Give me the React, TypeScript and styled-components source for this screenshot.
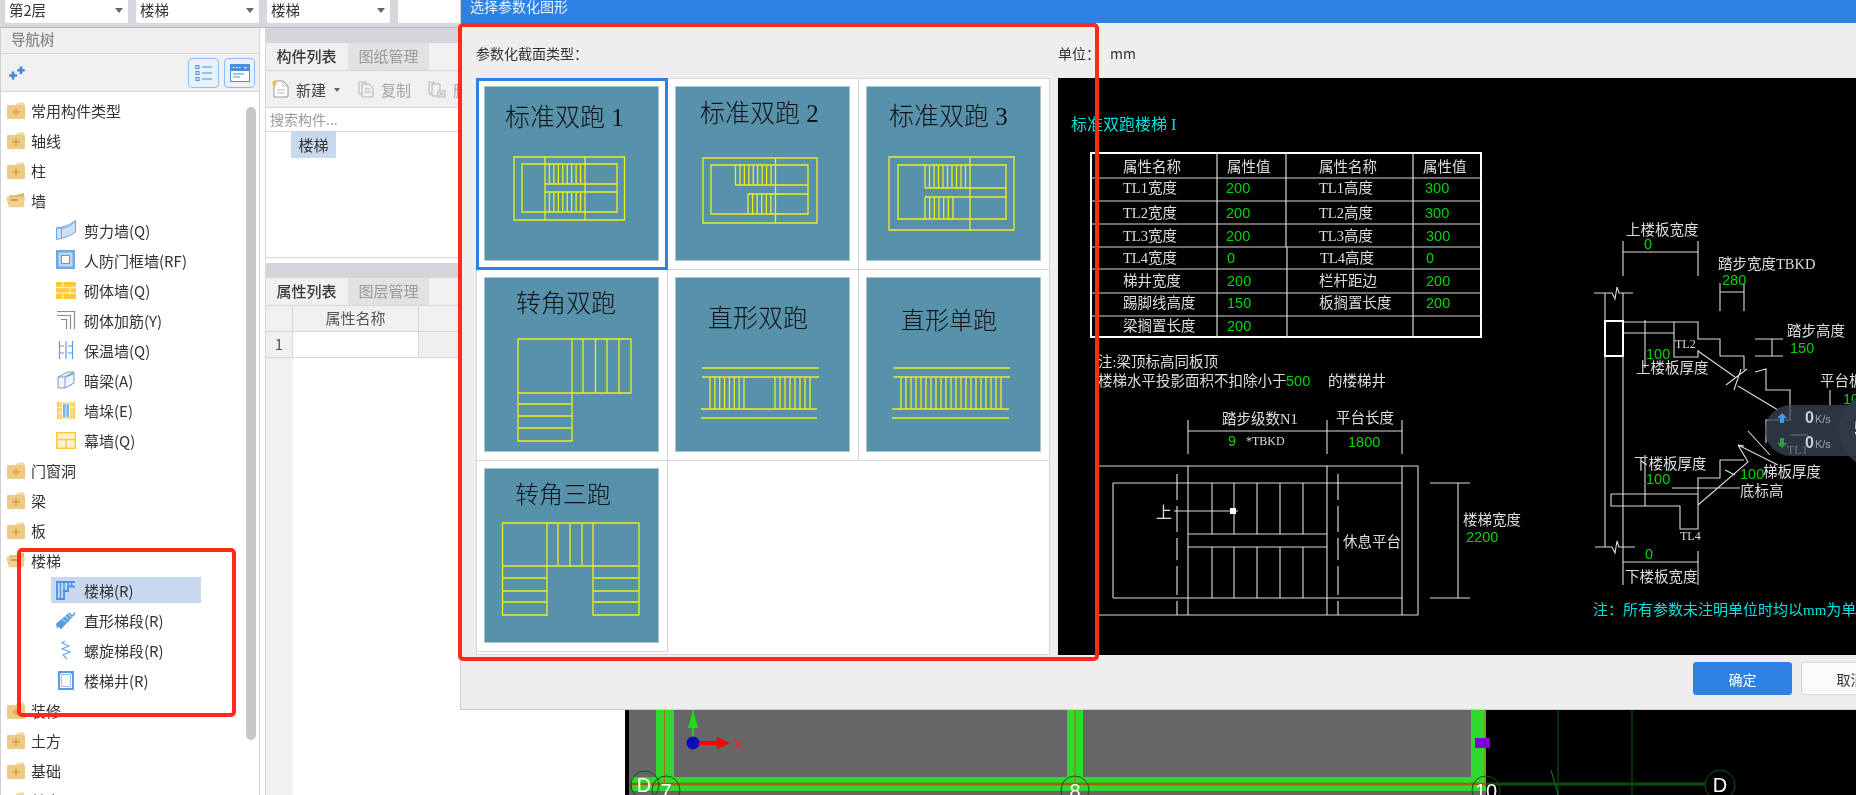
import React from "react";
import styled, { createGlobalStyle } from "styled-components";

const SANS = `"Noto Sans CJK SC", "Liberation Sans", sans-serif`;
const SERIF = `"Liberation Serif", "Noto Sans CJK SC", serif`;
const COLON = "\uFF1A";

const Global = createGlobalStyle`
  html, body { margin: 0; padding: 0; background: #fff; }
  body { font-family: ${SANS}; }
  * { box-sizing: border-box; }
`;

const Page = styled.div`
  position: relative;
  width: 1856px;
  height: 795px;
  overflow: hidden;
  display: flex;
  flex-direction: column;
  background: #fff;
  color: #333;
  filter: blur(0.35px);
`;

/* ---------- top selectors ---------- */
const TopBar = styled.div`
  flex: none;
  height: 28px;
  display: flex;
  gap: 8px;
  padding-left: 5px;
  background: #d6d8db;
  border-bottom: 1px solid #b9bbbe;
`;
const Select = styled.div<{ $wide?: boolean }>`
  width: ${(p) => (p.$wide ? "200px" : "123px")};
  height: 23px;
  background: #fff;
  border-radius: 0 0 2px 2px;
  padding-left: 4px;
  font-size: 14.5px;
  line-height: 20px;
  color: #333;
  display: flex;
  &::after {
    content: "";
    width: 0;
    height: 0;
    margin: 8px 5px 0 auto;
    border-left: 4px solid transparent;
    border-right: 4px solid transparent;
    border-top: 5px solid #666;
  }
`;

const Main = styled.div`
  flex: 1;
  display: flex;
  min-height: 0;
`;

/* ---------- navigation ---------- */
const NavPanel = styled.div`
  flex: none;
  width: 260px;
  display: flex;
  flex-direction: column;
  border-left: 1px solid #cfd1d4;
  border-right: 1px solid #d5d7da;
`;
const NavTitle = styled.div`
  height: 26px;
  padding-left: 10px;
  background: #efefef;
  border-bottom: 1px solid #d5d7da;
  font-size: 14.5px;
  line-height: 22px;
  font-weight: 500;
  color: #8a8a8a;
`;
const NavTools = styled.div`
  height: 38px;
  display: flex;
  align-items: center;
  gap: 5px;
  padding: 0 4px 0 7px;
  background: #f0f0f0;
  border-bottom: 1px solid #d5d7da;
`;
const ToolSpacer = styled.div`
  flex: 1;
`;
const ViewButton = styled.div`
  width: 31px;
  height: 30px;
  display: flex;
  align-items: center;
  justify-content: center;
  background: #e6f2fd;
  border: 1px solid #8dbdf2;
  border-radius: 4px;
`;
const TreeArea = styled.div`
  flex: 1;
  min-height: 0;
  display: flex;
  overflow: hidden;
`;
const TreeList = styled.div`
  flex: 1;
  padding-top: 3px;
`;
const TreeRow = styled.div<{ $child?: boolean; $selected?: boolean }>`
  height: 30px;
  display: flex;
  align-items: center;
  font-size: 15px;
  color: #333;
  gap: ${(p) => (p.$child ? "8px" : "5px")};
  padding-left: ${(p) => (p.$child ? "55px" : "5px")};
  ${(p) =>
    p.$selected &&
    `
    margin: 2px 0 2px 50px;
    height: 26px;
    width: 150px;
    padding-left: 5px;
    background: #c7d8ef;
  `}
`;
const IconBox = styled.span`
  flex: none;
  width: 20px;
  height: 20px;
  display: flex;
  align-items: center;
  justify-content: center;
`;
const ScrollThumb = styled.div`
  flex: none;
  width: 10px;
  height: 633px;
  margin: 15px 3px 0 0;
  border-radius: 5px;
  background: #c8c8c8;
`;
const Gap = styled.div`
  flex: none;
  width: 5px;
`;

/* ---------- component & property panels ---------- */
const MidPanel = styled.div`
  flex: none;
  width: 360px;
  display: flex;
  flex-direction: column;
  border-left: 1px solid #d5d7da;
`;
const Strip = styled.div`
  flex: none;
  height: 15px;
  background: #d3d5d9;
`;
const Tabs = styled.div`
  flex: none;
  height: 28px;
  display: flex;
  background: #f0f0f0;
  border-bottom: 1px solid #d5d7da;
`;
const Tab = styled.div<{ $active?: boolean }>`
  width: 81px;
  text-align: center;
  font-size: 15px;
  line-height: 25px;
  font-weight: ${(p) => (p.$active ? 500 : 400)};
  background: ${(p) => (p.$active ? "#f0f0f0" : "#e2e2e2")};
  color: ${(p) => (p.$active ? "#3a3a3a" : "#9a9a9a")};
  margin-right: 1px;
`;
const Tools = styled.div`
  flex: none;
  height: 37px;
  display: flex;
  align-items: center;
  padding-left: 5px;
  background: #f0f0f0;
  border-bottom: 1px solid #d5d7da;
  font-size: 15px;
  white-space: nowrap;
`;
const ToolLabel = styled.span<{ $muted?: boolean }>`
  margin: 0 ${(p) => (p.$muted ? "17px" : "7px")} 0 7px;
  color: ${(p) => (p.$muted ? "#a5a5a5" : "#444")};
`;
const Caret = styled.span`
  width: 0;
  height: 0;
  margin: 2px 18px 0 1px;
  border-left: 3.5px solid transparent;
  border-right: 3.5px solid transparent;
  border-top: 4px solid #666;
`;
const Search = styled.div`
  flex: none;
  height: 24px;
  padding-left: 4px;
  border-bottom: 1px solid #d5d7da;
  font-size: 14px;
  line-height: 22px;
  color: #9a9a9a;
`;
const ListArea = styled.div`
  flex: none;
  height: 126px;
  padding-left: 25px;
  border-bottom: 1px solid #d5d7da;
`;
const ListItem = styled.div`
  width: 45px;
  height: 26px;
  background: #c7d8ef;
  text-align: center;
  font-size: 15px;
  line-height: 25px;
  color: #333;
`;
const PanelGap = styled.div`
  flex: none;
  height: 5px;
`;
const PropTable = styled.div`
  flex: 1;
  display: grid;
  grid-template-columns: 27px 126px 1fr;
  grid-template-rows: 26px 26px 1fr;
  font-size: 15px;
`;
const HeadCell = styled.div`
  background: #f0f0f0;
  border-right: 1px solid #d5d7da;
  border-bottom: 1px solid #d5d7da;
  text-align: center;
  line-height: 24px;
  color: #555;
`;
const RowNo = styled(HeadCell)`
  color: #555;
`;
const BlankCell = styled.div<{ $grey?: boolean }>`
  background: ${(p) => (p.$grey ? "#efefef" : "#fff")};
  border-bottom: 1px solid #d5d7da;
  border-right: 1px solid #d5d7da;
`;
const Gutter = styled.div`
  background: #f0f0f0;
`;

const Viewport = styled.div`
  flex: 1;
  min-width: 0;
  background: #000;
`;
const ViewportSvg = styled.svg`
  display: block;
`;
const AxisText = styled.text`
  font-family: "Liberation Sans", sans-serif;
  font-size: 20px;
  fill: #fff;
  text-anchor: middle;
`;
const AxisX = styled.text`
  font-family: "Liberation Sans", sans-serif;
  font-size: 15px;
  fill: #ff2020;
`;

/* ---------- dialog ---------- */
const Dialog = styled.div`
  position: absolute;
  left: 460px;
  top: 0;
  width: 1456px;
  height: 710px;
  display: flex;
  flex-direction: column;
  background: #eeeeee;
  border: 1px solid #c9ced6;
  border-top: 0;
`;
const DialogTitle = styled.div`
  flex: none;
  height: 23px;
  padding-left: 9px;
  background: #2f80e3;
  color: #e9f2fd;
  font-size: 14px;
  line-height: 13px;
  overflow: hidden;
`;
const LabelRow = styled.div`
  flex: none;
  height: 55px;
  display: flex;
  align-items: center;
  padding: 5px 0 0 15px;
  font-size: 14px;
  color: #333;
`;
const GridLabel = styled.span`
  width: 582px;
`;
const UnitLabel = styled.span`
  margin-right: 10px;
`;
const DialogBody = styled.div`
  flex: none;
  height: 577px;
  display: flex;
  gap: 8px;
  padding: 0 15px;
`;
const ShapeGrid = styled.div`
  flex: none;
  width: 574px;
  height: 577px;
  display: grid;
  grid-template-columns: 191px 191px 190px;
  grid-auto-rows: 191px;
  background: #fff;
  border: 1px solid #d3d6da;
`;
const ShapeCell = styled.div<{ $selected?: boolean }>`
  padding: 7px;
  background: #fff;
  border-bottom: 1px solid #d3d6da;
  border-right: 1px solid #d3d6da;
  &:nth-child(3n) {
    border-right: 0;
  }
  ${(p) =>
    p.$selected &&
    `
    margin: -1px 0 0 -1px;
    padding: 5px;
    border: 3px solid #2f80e3;
  `}
`;
const ShapeSvg = styled.svg`
  display: block;
  width: 175px;
  height: 175px;
  background: #5891aa;
  box-shadow: 0 0 0 1px #a9c5d2 inset;
`;
const ShapeTitle = styled.text<{ $size: number }>`
  font-family: ${SERIF};
  font-weight: 300;
  font-size: ${(p) => p.$size}px;
  fill: #101418;
`;
const CadPane = styled.div`
  flex: 1;
  background: #000;
  min-width: 0;
`;
const CadSvg = styled.svg`
  display: block;
`;
const CadLabel = styled.text<{ $kind?: "white" | "green" | "cyan"; $size?: number }>`
  font-family: ${(p) => (p.$kind === "green" ? `"Liberation Sans", sans-serif` : SERIF)};
  font-size: ${(p) => p.$size ?? 14.5}px;
  fill: ${(p) =>
    p.$kind === "green" ? "#00d400" : p.$kind === "cyan" ? "#00e0e0" : "#dedede"};
  dominant-baseline: central;
`;
const Footer = styled.div`
  flex: 1;
  display: flex;
  justify-content: flex-end;
  align-items: flex-start;
  gap: 9px;
  padding: 7px 15px 0 0;
`;
const Button = styled.div<{ $primary?: boolean }>`
  width: 99px;
  height: 33px;
  text-align: center;
  font-size: 14px;
  line-height: 32px;
  border-radius: 3px;
  background: ${(p) => (p.$primary ? "#2f80e3" : "#fbfbfb")};
  color: ${(p) => (p.$primary ? "#fff" : "#333")};
  border: 1px solid ${(p) => (p.$primary ? "#2f80e3" : "#d3d6da")};
`;

/* ---------- overlays ---------- */
const Annotation = styled.div<{ $l: number; $t: number; $w: number; $h: number }>`
  position: absolute;
  left: ${(p) => p.$l}px;
  top: ${(p) => p.$t}px;
  width: ${(p) => p.$w}px;
  height: ${(p) => p.$h}px;
  border: 4px solid #ff2a1a;
  border-radius: 5px;
`;
const SpeedPill = styled.div`
  position: absolute;
  left: 1765px;
  top: 405px;
  width: 120px;
  height: 51px;
  border-radius: 26px;
  background: rgba(62, 72, 88, 0.72);
  display: grid;
  grid-template-rows: 1fr 1fr;
  padding-left: 11px;
  font-family: "Liberation Sans", sans-serif;
`;
const SpeedRow = styled.div`
  display: flex;
  align-items: center;
  gap: 17px;
  color: #c9ced6;
  font-size: 16px;
  font-weight: 700;
`;
const SpeedUnit = styled.span`
  font-size: 11px;
  font-weight: 400;
  color: #9aa3ae;
  margin-left: 1px;
`;
const SpeedDial = styled.div`
  position: absolute;
  left: 1839px;
  top: 391px;
  width: 78px;
  height: 78px;
  border-radius: 50%;
  background: rgba(50, 58, 72, 0.9);
  color: #d5d9df;
  font-family: "Liberation Sans", sans-serif;
  font-size: 22px;
  font-weight: 700;
  padding: 25px 0 0 15px;
`;

/* ---------- icons ---------- */
const FolderClosed = () => (
  <svg width="18" height="17" viewBox="0 0 18 17">
    <path d="M9 2 L12 .5 H17 V3 H9Z" fill="#f3d9a4" />
    <rect x="0" y="3" width="18" height="14" rx="1" fill="#eecb85" />
    <path d="M9 6.5v7M5.5 10h7" stroke="#dba94f" strokeWidth="2" />
  </svg>
);
const FolderOpen = () => (
  <svg width="21" height="16" viewBox="0 0 21 16">
    <path d="M3 3 L9 3 L19 .5 V14 H3Z" fill="#e3b96b" />
    <path d="M0 5 H20 L18 15.5 H3Z" fill="#f0cf8d" />
    <path d="M5 8h7" stroke="#c4994a" strokeWidth="2" />
  </svg>
);
const IconShear = () => (
  <svg width="20" height="20" viewBox="0 0 20 20">
    <path d="M.5 8 C7 7 14 5 19.5 .5 V12 C14 16 7 18.5 .5 19.5Z" fill="#cfe0f5" stroke="#6ba4e6" />
    <path d="M.5 8 C7 9 14 8 19.5 .5M5.5 8v10" fill="none" stroke="#6ba4e6" />
  </svg>
);
const IconFrame = () => (
  <svg width="20" height="20" viewBox="0 0 20 20">
    <rect width="19" height="19" fill="#6fa8e8" />
    <rect x="2.5" y="2.5" width="14" height="14" fill="#bcd7f6" />
    <rect x="5.5" y="5.5" width="8" height="8" fill="#fff" stroke="#5b9be0" />
  </svg>
);
const IconBrick = () => (
  <svg width="20" height="17" viewBox="0 0 20 17">
    <rect width="20" height="17" fill="#ffc83d" />
    <path d="M0 5.5H20M0 11H20M7 0V5.5M14 5.5V11M7 11V17" stroke="#ffeeb5" strokeWidth="1.3" />
  </svg>
);
const IconRebar = () => (
  <svg width="20" height="20" viewBox="0 0 20 20">
    <path d="M1 1.5H18.5V19M1 5.5H14.5V19M5 9.5H10.5V19" fill="none" stroke="#7f8fa5" strokeWidth="1.2" />
  </svg>
);
const IconInsul = () => (
  <svg width="16" height="18" viewBox="0 0 16 18">
    <path d="M1.5 0V18M8 0V18M14.5 0V18M1 5H6M10 5H15M1 12H6M10 12H15" stroke="#5b9be0" strokeWidth="1.2" />
  </svg>
);
const IconBeam = () => (
  <svg width="18" height="18" viewBox="0 0 18 18">
    <path d="M1 6 L11 1 H17 V12 L8 17 H1Z" fill="#eef4fc" stroke="#7b9cc6" />
    <path d="M1 6H8L17 1M8 6V17" fill="none" stroke="#7b9cc6" />
    <path d="M9 5 L16 1.6 V3.5 L9 6.5Z" fill="#6fa8e8" />
  </svg>
);
const IconPier = () => (
  <svg width="18" height="17" viewBox="0 0 18 17">
    <rect width="18" height="17" fill="#ffcd52" />
    <path d="M0 5.5H18M0 11H18M3 0V17M15 0V17" stroke="#fff0c2" />
    <rect x="5.5" y="1" width="7" height="15" fill="#7fb2ea" stroke="#fff" />
    <path d="M9 1V16" stroke="#dfeeff" />
  </svg>
);
const IconCurtain = () => (
  <svg width="20" height="17" viewBox="0 0 20 17">
    <rect x=".75" y=".75" width="18.5" height="15.5" fill="#fff4d2" stroke="#ffc83d" strokeWidth="1.5" />
    <path d="M0 7.5H20M10 7.5V17" stroke="#ffc83d" strokeWidth="1.6" />
  </svg>
);
const IconStair = () => (
  <svg width="20" height="19" viewBox="0 0 20 19">
    <path d="M0 1H19M1 1V18H8V10H12V5.5H19" fill="none" stroke="#4a92e6" strokeWidth="1.8" />
    <path d="M4.5 1V18M8 1V10M12 1V5.5M15.5 1V5.5" fill="none" stroke="#4a92e6" strokeWidth="1.4" />
  </svg>
);
const IconRun = () => (
  <svg width="21" height="21" viewBox="0 0 21 21">
    <path d="M0 14 L14 2 L17 5 L20 1 L20 4 L5 20 L3 17 L1 19Z" fill="#5a9be6" />
    <path d="M7 9l3 3M10 6l3 3M13 4l3 3" stroke="#fff" strokeWidth="1" />
  </svg>
);
const IconSpiral = () => (
  <svg width="12" height="20" viewBox="0 0 12 20">
    <path d="M5 1 L2 3 L9 6 L2 9 L10 12 L3 15 L7 19" fill="none" stroke="#6ea7e8" strokeWidth="1.2" />
  </svg>
);
const IconShaft = () => (
  <svg width="16" height="19" viewBox="0 0 16 19">
    <rect x="1" y="1" width="14" height="17" fill="#fff" stroke="#5b9be0" strokeWidth="2" />
    <rect x="3.5" y="3.5" width="9" height="12" fill="#fff" stroke="#9cc2ee" />
    <path d="M1 1L3.5 3.5M15 1L12.5 3.5" stroke="#5b9be0" />
  </svg>
);
const IconSpark = () => (
  <svg width="18" height="14" viewBox="0 0 18 14">
    <path d="M5 5.5V13.5M1 9.5H9" stroke="#3f87d8" strokeWidth="2.6" />
    <path d="M13 .5V8M9.3 4.2H16.7" stroke="#3f87d8" strokeWidth="2.6" />
  </svg>
);
const IconList = () => (
  <svg width="18" height="18" viewBox="0 0 18 18">
    <path d="M7 3H17M7 9H17M7 15H17" stroke="#4a8fd8" strokeWidth="1.2" />
    <rect x="1" y="1.5" width="3" height="3" fill="none" stroke="#4a8fd8" />
    <rect x="1" y="7.5" width="3" height="3" fill="none" stroke="#4a8fd8" />
    <rect x="1" y="13.5" width="3" height="3" fill="none" stroke="#4a8fd8" />
  </svg>
);
const IconWindow = () => (
  <svg width="20" height="18" viewBox="0 0 20 18">
    <rect x=".5" y=".5" width="19" height="17" fill="#fff" stroke="#4a8fd8" />
    <rect x="1" y="1" width="18" height="6" fill="#4a8fd8" />
    <path d="M3 3.5h1.5M6 3.5h1.5M9 3.5h1.5" stroke="#fff" />
    <path d="M14 3l3 0-1.5 2z" fill="#fff" />
    <path d="M3 10h11M3 13h7" stroke="#4a8fd8" />
  </svg>
);
const IconNew = () => (
  <svg width="18" height="18" viewBox="0 0 18 18">
    <path d="M3 1H12L17 6V17H3Z" fill="#fff" stroke="#9a9a9a" />
    <path d="M12 1V6H17M6 10H14M6 13H14" fill="none" stroke="#b5b5b5" />
    <path d="M3.5 0l.9 2 2.1.3-1.5 1.5.4 2.1-1.9-1-1.9 1 .4-2.1L.5 2.3 2.6 2Z" fill="#f2b93b" />
  </svg>
);
const IconCopy = () => (
  <svg width="16" height="17" viewBox="0 0 16 17">
    <path d="M1 1H8V3M4 3H11L15 7V16H4Z" fill="none" stroke="#b4b4b4" />
    <path d="M1 1V13H4M6.5 8H12.5M6.5 11H12.5" fill="none" stroke="#b4b4b4" />
  </svg>
);
const IconDelete = () => (
  <svg width="18" height="17" viewBox="0 0 18 17">
    <path d="M6 3V1H1V13H4M4 3H12V9M4 3V15H9" fill="none" stroke="#b4b4b4" />
    <rect x="10" y="10" width="7" height="6" fill="none" stroke="#b4b4b4" />
    <path d="M11.5 11.5L15.5 14.5M15.5 11.5L11.5 14.5" stroke="#b4b4b4" />
  </svg>
);
const ArrowUpIcon = () => (
  <svg width="12" height="12" viewBox="0 0 12 12">
    <path d="M6 1L11 6H8V11H4V6H1Z" fill="#3d9fe8" />
  </svg>
);
const ArrowDownIcon = () => (
  <svg width="12" height="12" viewBox="0 0 12 12">
    <path d="M6 11L11 6H8V1H4V6H1Z" fill="#2e9e3e" />
  </svg>
);

/* ---------- data ---------- */
type Node = { label: string; icon: React.ReactNode; child?: boolean; selected?: boolean };
const closed = <FolderClosed />;
const tree: Node[] = [
  { label: "常用构件类型", icon: closed },
  { label: "轴线", icon: closed },
  { label: "柱", icon: closed },
  { label: "墙", icon: <FolderOpen /> },
  { label: "剪力墙(Q)", icon: <IconShear />, child: true },
  { label: "人防门框墙(RF)", icon: <IconFrame />, child: true },
  { label: "砌体墙(Q)", icon: <IconBrick />, child: true },
  { label: "砌体加筋(Y)", icon: <IconRebar />, child: true },
  { label: "保温墙(Q)", icon: <IconInsul />, child: true },
  { label: "暗梁(A)", icon: <IconBeam />, child: true },
  { label: "墙垛(E)", icon: <IconPier />, child: true },
  { label: "幕墙(Q)", icon: <IconCurtain />, child: true },
  { label: "门窗洞", icon: closed },
  { label: "梁", icon: closed },
  { label: "板", icon: closed },
  { label: "楼梯", icon: <FolderOpen /> },
  { label: "楼梯(R)", icon: <IconStair />, child: true, selected: true },
  { label: "直形梯段(R)", icon: <IconRun />, child: true },
  { label: "螺旋梯段(R)", icon: <IconSpiral />, child: true },
  { label: "楼梯井(R)", icon: <IconShaft />, child: true },
  { label: "装修", icon: closed },
  { label: "土方", icon: closed },
  { label: "基础", icon: closed },
  { label: "其它", icon: closed },
];

const rect = (x0: number, y0: number, x1: number, y1: number) =>
  `M${x0} ${y0}H${x1}V${y1}H${x0}Z`;
const hline = (y: number, x0: number, x1: number) => `M${x0} ${y}H${x1}`;
const vline = (x: number, y0: number, y1: number) => `M${x} ${y0}V${y1}`;
const vsteps = (x0: number, x1: number, y0: number, y1: number, n: number) =>
  Array.from({ length: n + 1 }, (_, i) => vline(x0 + ((x1 - x0) * i) / n, y0, y1)).join("");

type Shape = { title: string; x: number; y: number; size: number; d: string };
const shapes: Shape[] = [
  {
    title: "标准双跑 1",
    x: 21,
    y: 40,
    size: 25,
    d:
      rect(30, 71, 140.5, 134) +
      rect(38, 78, 133, 126) +
      vline(61, 71, 134) +
      vline(101, 71, 134) +
      vsteps(61, 101, 78, 98, 9) +
      vsteps(61, 101, 106, 126, 9) +
      hline(98, 61, 133) +
      hline(106, 61, 133),
  },
  {
    title: "标准双跑 2",
    x: 25,
    y: 36,
    size: 25,
    d:
      rect(28, 72, 142, 137) +
      rect(36, 79, 133, 128) +
      vline(100.5, 72, 137) +
      vsteps(60.5, 100.5, 79, 99, 9) +
      vsteps(73, 100.5, 108, 128, 6) +
      hline(99, 60.5, 133) +
      hline(108, 73, 133),
  },
  {
    title: "标准双跑 3",
    x: 23,
    y: 39,
    size: 25,
    d:
      rect(23, 71, 148, 144) +
      rect(32, 79, 140, 133) +
      vline(104, 71, 144) +
      vsteps(59, 104, 79, 102, 10) +
      vsteps(59, 87, 111, 133, 6) +
      hline(102, 59, 140) +
      hline(111, 59, 140),
  },
  {
    title: "转角双跑",
    x: 32,
    y: 35,
    size: 25,
    d:
      rect(34, 62, 147, 116) +
      rect(34, 116, 88, 164) +
      vline(88, 62, 116) +
      vline(99, 62, 116) +
      vline(111.5, 62, 116) +
      vline(123, 62, 116) +
      vline(135, 62, 116) +
      hline(127, 34, 88) +
      hline(139, 34, 88) +
      hline(151, 34, 88),
  },
  {
    title: "直形双跑",
    x: 33,
    y: 50,
    size: 25,
    d:
      hline(91, 27, 144) +
      hline(100, 27, 144) +
      hline(132, 26, 142) +
      hline(141, 26, 142) +
      vsteps(35, 69, 100, 132, 7) +
      vsteps(100, 135, 100, 132, 7),
  },
  {
    title: "直形单跑",
    x: 35,
    y: 52,
    size: 24,
    d:
      hline(91, 27.5, 144) +
      hline(100, 27.5, 144) +
      hline(132, 26, 143) +
      hline(141, 26, 143) +
      vsteps(35, 135, 100, 132, 20),
  },
  {
    title: "转角三跑",
    x: 31,
    y: 35,
    size: 24,
    d:
      rect(18.5, 55, 155, 98) +
      rect(18.5, 98, 63, 147) +
      rect(109, 98, 155, 147) +
      vline(63, 55, 98) +
      vline(74, 55, 98) +
      vline(86, 55, 98) +
      vline(98, 55, 98) +
      vline(109, 55, 98) +
      hline(110, 18.5, 63) +
      hline(123, 18.5, 63) +
      hline(134, 18.5, 63) +
      hline(110, 109, 155) +
      hline(123, 109, 155) +
      hline(134, 109, 155),
  },
];

type Lbl = [string, number, number, ("white" | "green" | "cyan")?, number?];
const rowY = [188, 213, 236, 258, 281, 303, 326];
const tableText: Lbl[] = [
  ["属性名称", 1123, 167],
  ["属性值", 1227, 167],
  ["属性名称", 1319, 167],
  ["属性值", 1423, 167],
  ["TL1宽度", 1123, rowY[0]],
  ["TL2宽度", 1123, rowY[1]],
  ["TL3宽度", 1123, rowY[2]],
  ["TL4宽度", 1123, rowY[3]],
  ["梯井宽度", 1123, rowY[4]],
  ["踢脚线高度", 1123, rowY[5]],
  ["梁搁置长度", 1123, rowY[6]],
  ["200", 1226, rowY[0], "green"],
  ["200", 1226, rowY[1], "green"],
  ["200", 1226, rowY[2], "green"],
  ["0", 1227, rowY[3], "green"],
  ["200", 1227, rowY[4], "green"],
  ["150", 1227, rowY[5], "green"],
  ["200", 1227, rowY[6], "green"],
  ["TL1高度", 1319, rowY[0]],
  ["TL2高度", 1319, rowY[1]],
  ["TL3高度", 1319, rowY[2]],
  ["TL4高度", 1320, rowY[3]],
  ["栏杆距边", 1319, rowY[4]],
  ["板搁置长度", 1319, rowY[5]],
  ["300", 1425, rowY[0], "green"],
  ["300", 1425, rowY[1], "green"],
  ["300", 1426, rowY[2], "green"],
  ["0", 1426, rowY[3], "green"],
  ["200", 1426, rowY[4], "green"],
  ["200", 1426, rowY[5], "green"],
];
const cadText: Lbl[] = [
  ["标准双跑楼梯 I", 1071, 124, "cyan", 16],
  ["注:梁顶标高同板顶", 1098, 362],
  ["楼梯水平投影面积不扣除小于", 1098, 381],
  ["500", 1286, 381, "green"],
  ["的楼梯井", 1328, 381],
  ["踏步级数N1", 1222, 419],
  ["平台长度", 1336, 418],
  ["9", 1228, 441, "green"],
  ["*TBKD", 1246, 441, "white", 12],
  ["1800", 1348, 442, "green"],
  ["上", 1156, 512, "white", 16],
  ["休息平台", 1343, 542],
  ["楼梯宽度", 1463, 520],
  ["2200", 1466, 537, "green"],
  ["上楼板宽度", 1626, 230],
  ["0", 1644, 244, "green"],
  ["踏步宽度TBKD", 1718, 264],
  ["280", 1722, 280, "green"],
  ["TL2", 1675, 344, "white", 12],
  ["100", 1646, 354, "green"],
  ["上楼板厚度", 1636, 368],
  ["踏步高度", 1787, 331],
  ["150", 1790, 348, "green"],
  ["平台板厚度", 1820, 381],
  ["100", 1843, 399, "green"],
  ["TL1", 1787, 450, "white", 12],
  ["下楼板厚度", 1634, 464],
  ["100", 1646, 479, "green"],
  ["100", 1740, 474, "green"],
  ["梯板厚度", 1763, 472],
  ["底标高", 1740, 491],
  ["TL4", 1680, 536, "white", 12],
  ["0", 1645, 554, "green"],
  ["下楼板宽度", 1625, 577],
  [`注${COLON}所有参数未注明单位时均以mm为单位`, 1593, 610, "cyan", 15],
];

const tableOuter = rect(1091, 153, 1481, 337);
const tableGrid =
  [178, 201, 224, 247, 269, 293, 316].map((y) => hline(y, 1091, 1481)).join("") +
  vline(1217, 153, 337) +
  vline(1286, 153, 247) +
  vline(1287, 247, 337) +
  vline(1413, 153, 337);

const planLines =
  hline(466, 1098, 1418) +
  hline(615, 1098, 1418) +
  vline(1418, 466, 615) +
  hline(483, 1113, 1402) +
  hline(598, 1113, 1402) +
  vline(1113, 483, 598) +
  vline(1188, 466, 615) +
  vline(1327, 466, 615) +
  vline(1402, 466, 615) +
  hline(534, 1188, 1327) +
  hline(547, 1188, 1327) +
  [1212, 1234, 1257, 1280, 1303].map((x) => vline(x, 483, 534) + vline(x, 547, 598)).join("") +
  hline(511, 1174, 1238) +
  hline(431, 1188, 1402) +
  vline(1188, 420, 454) +
  vline(1327, 420, 454) +
  vline(1402, 420, 454) +
  hline(483, 1430, 1470) +
  hline(598, 1430, 1470) +
  vline(1458, 483, 598);

const sectionLines =
  hline(252, 1623, 1698) +
  vline(1623, 241, 276) +
  vline(1698, 241, 276) +
  hline(292, 1720, 1744) +
  vline(1720, 283, 311) +
  vline(1744, 283, 311) +
  "M1594 293H1612L1615 299L1617 287L1619 293H1633" +
  "M1595 547H1612L1615 553L1617 541L1619 547H1635" +
  vline(1605, 293, 547) +
  vline(1623, 293, 585) +
  vline(1698, 551, 585) +
  hline(562, 1623, 1698) +
  "M1622 322H1698V339H1720V356H1744V370" +
  "M1622 333H1674M1674 322V357H1698V350" +
  "M1698 351L1735 377M1726 385L1747 369M1738 386L1778 410" +
  "M1741 369L1734 390M1755 372L1766 369V390H1790V420H1766V443" +
  "M1790 435H1808M1748 431L1770 455" +
  "M1744 446L1738 445L1778 465" +
  vline(1645, 320, 368) +
  vline(1645, 455, 506) +
  "M1611 494H1698V478H1720V460H1744" +
  "M1611 494V506H1680V529H1698V478" +
  hline(488, 1672, 1740) +
  "M1698 505L1748 462L1738 445M1725 470L1735 475" +
  hline(339, 1755, 1783) +
  hline(356, 1755, 1783) +
  vline(1772, 339, 356) +
  "M1830 390V405";

const App: React.FC = () => (
  <Page>
    <Global />
    <TopBar>
      <Select>第2层</Select>
      <Select>楼梯</Select>
      <Select>楼梯</Select>
      <Select $wide />
    </TopBar>
    <Main>
      <NavPanel>
        <NavTitle>导航树</NavTitle>
        <NavTools>
          <IconSpark />
          <ToolSpacer />
          <ViewButton>
            <IconList />
          </ViewButton>
          <ViewButton>
            <IconWindow />
          </ViewButton>
        </NavTools>
        <TreeArea>
          <TreeList>
            {tree.map((n) => (
              <TreeRow key={n.label} $child={n.child} $selected={n.selected}>
                <IconBox>{n.icon}</IconBox>
                {n.label}
              </TreeRow>
            ))}
          </TreeList>
          <ScrollThumb />
        </TreeArea>
      </NavPanel>
      <Gap />
      <MidPanel>
        <Strip />
        <Tabs>
          <Tab $active>构件列表</Tab>
          <Tab>图纸管理</Tab>
        </Tabs>
        <Tools>
          <IconNew />
          <ToolLabel>新建</ToolLabel>
          <Caret />
          <IconCopy />
          <ToolLabel $muted>复制</ToolLabel>
          <IconDelete />
          <ToolLabel $muted>删除</ToolLabel>
        </Tools>
        <Search>搜索构件...</Search>
        <ListArea>
          <ListItem>楼梯</ListItem>
        </ListArea>
        <PanelGap />
        <Strip />
        <Tabs>
          <Tab $active>属性列表</Tab>
          <Tab>图层管理</Tab>
        </Tabs>
        <PropTable>
          <HeadCell />
          <HeadCell>属性名称</HeadCell>
          <HeadCell>属性值</HeadCell>
          <RowNo>1</RowNo>
          <BlankCell />
          <BlankCell $grey />
          <Gutter />
          <div />
          <div />
        </PropTable>
      </MidPanel>
      <Viewport>
        <ViewportSvg width="1231" height="767" viewBox="625 28 1231 767">
          <rect x="629" y="28" width="857" height="767" fill="#666" />
          <path d="M1558 28V795M1632 28V795" stroke="#0f4d0f" strokeWidth="1.2" />
          <path d="M1486 784H1705" stroke="#0f4d0f" strokeWidth="3" />
          <path d="M1551 770L1558 795" stroke="#1c7a1c" />
          <circle cx="1720" cy="785" r="15" fill="none" stroke="#0c550c" />
          <path
            d="M656 28H674V777H1067V28H1083V777H1471V28H1486V791H632V777H656Z"
            fill="#2ed82e"
          />
          <path d="M664.5 28V784M1075 28V784M1485 28V784" stroke="#b06a10" strokeWidth="1" fill="none" />
          <path d="M632 784H1486" stroke="#a85a10" strokeWidth="2.5" />
          <path d="M693 710V738" stroke="#19e019" strokeWidth="1.6" />
          <path d="M693 710L688 728H698Z" fill="#19e019" />
          <ellipse cx="693" cy="743" rx="6.5" ry="6.5" fill="#0b0bb8" />
          <path d="M699 741H717V737L730 743L717 749V745H699Z" fill="#ff0000" />
          <AxisX x="733" y="749">X</AxisX>
          <rect x="1475" y="738" width="15" height="10" fill="#7d00d8" />
          <circle cx="645" cy="785" r="14" fill="none" stroke="#0c550c" />
          <circle cx="666" cy="790" r="14" fill="none" stroke="#0c550c" />
          <circle cx="1075" cy="790" r="14" fill="none" stroke="#0c550c" />
          <circle cx="1486" cy="790" r="14" fill="none" stroke="#0c550c" />
          <AxisText x="644" y="792">D</AxisText>
          <AxisText x="666" y="798">7</AxisText>
          <AxisText x="1075" y="798">8</AxisText>
          <AxisText x="1486" y="798">10</AxisText>
          <AxisText x="1720" y="792">D</AxisText>
        </ViewportSvg>
      </Viewport>
    </Main>

    <Dialog>
      <DialogTitle>选择参数化图形</DialogTitle>
      <LabelRow>
        <GridLabel>{`参数化截面类型${COLON}`}</GridLabel>
        <UnitLabel>{`单位${COLON}`}</UnitLabel>
        <span>mm</span>
      </LabelRow>
      <DialogBody>
        <ShapeGrid>
          {shapes.map((s, i) => (
            <ShapeCell key={s.title} $selected={i === 0}>
              <ShapeSvg viewBox="0 0 175 175">
                <ShapeTitle x={s.x} y={s.y} $size={s.size}>
                  {s.title}
                </ShapeTitle>
                <path d={s.d} fill="none" stroke="#eaf01c" strokeWidth="1.3" />
              </ShapeSvg>
            </ShapeCell>
          ))}
        </ShapeGrid>
        <CadPane>
          <CadSvg width="843" height="577" viewBox="1058 78 843 577">
            <path d={tableOuter} fill="none" stroke="#fff" strokeWidth="2" />
            <path d={tableGrid} fill="none" stroke="#d8d8d8" strokeWidth="1.2" />
            <path d={planLines} fill="none" stroke="#dcdcdc" strokeWidth="1.1" />
            <path
              d="M1177 474V500M1177 506V532M1177 538V560M1177 566V595M1177 601V615M1338 474V500M1338 506V532M1338 538V560M1338 566V595M1338 601V615"
              stroke="#e8e8e8"
              strokeWidth="1.1"
            />
            <rect x="1230" y="508" width="6" height="6" fill="#fff" />
            <path d={sectionLines} fill="none" stroke="#dcdcdc" strokeWidth="1.1" />
            <rect x="1605" y="321" width="18" height="35" fill="none" stroke="#fff" strokeWidth="2" />
            {[...tableText, ...cadText].map(([t, x, y, kind, size], i) => (
              <CadLabel key={i} x={x} y={y} $kind={kind} $size={size}>
                {t}
              </CadLabel>
            ))}
          </CadSvg>
        </CadPane>
      </DialogBody>
      <Footer>
        <Button $primary>确定</Button>
        <Button>取消</Button>
      </Footer>
    </Dialog>

    <SpeedPill>
      <SpeedRow>
        <ArrowUpIcon />
        <span>
          0<SpeedUnit>K/s</SpeedUnit>
        </span>
      </SpeedRow>
      <SpeedRow>
        <ArrowDownIcon />
        <span>
          0<SpeedUnit>K/s</SpeedUnit>
        </span>
      </SpeedRow>
    </SpeedPill>
    <SpeedDial>5</SpeedDial>

    <Annotation $l={458} $t={23} $w={641} $h={638} />
    <Annotation $l={17} $t={548} $w={219} $h={169} />
  </Page>
);

export default App;
